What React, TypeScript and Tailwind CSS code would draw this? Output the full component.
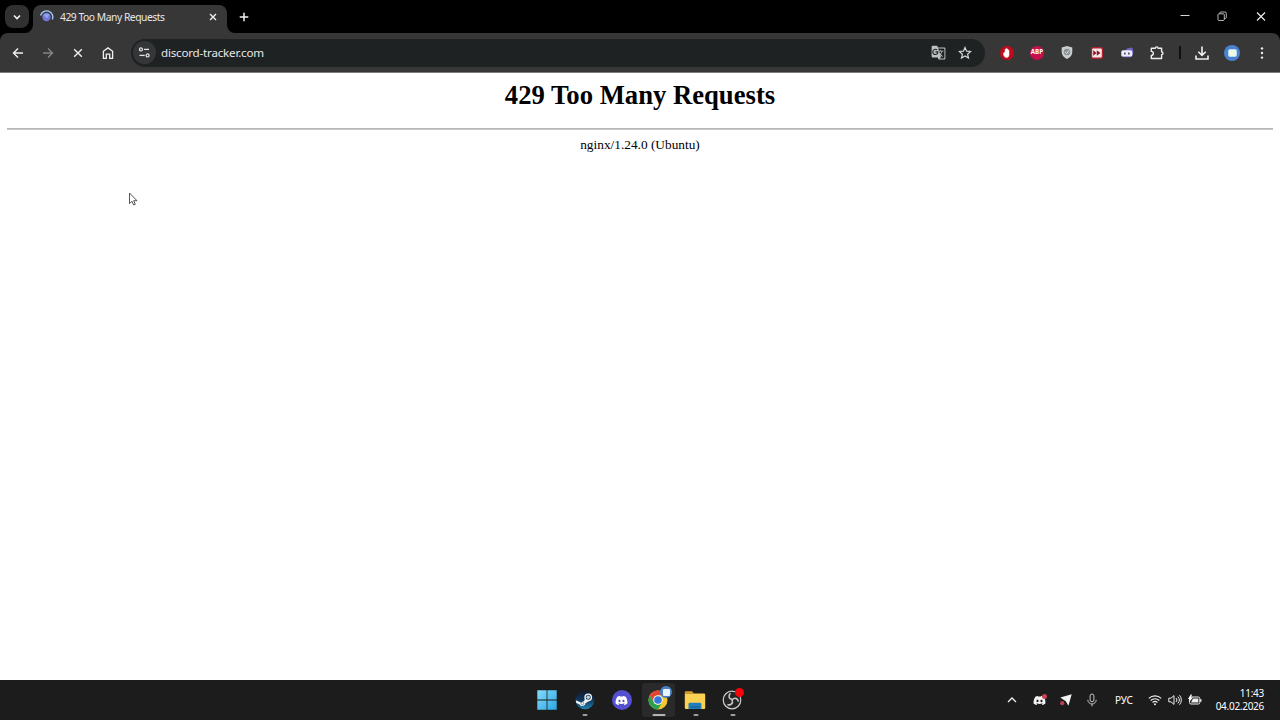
import type { ReactNode } from 'react';
import { FaDiscord } from 'react-icons/fa';
import { MdGTranslate } from 'react-icons/md';

function Slot({ children }: { children: ReactNode }) {
  return (
    <div className="w-[30px] h-[30px] shrink-0 flex items-center justify-center">
      {children}
    </div>
  );
}

function TabStrip() {
  return (
    <div className="h-[33px] bg-black flex items-start">
      <button className="mt-[5px] ml-[5px] w-6 h-[23px] rounded-[8px] bg-[#303030] flex items-center justify-center">
        <svg width="10" height="10" viewBox="0 0 10 10" fill="none" stroke="#f2f2f2" strokeWidth="1.6">
          <path d="M2 3.5 L5 6.5 L8 3.5" />
        </svg>
      </button>

      {/* Active tab */}
      <div className="relative mt-[5px] ml-1 w-[194px] h-7 rounded-t-[8px] bg-[#373737] flex items-center text-[#e8e8e8]">
        <svg className="absolute -left-2 bottom-0" width="8" height="8" viewBox="0 0 8 8">
          <path d="M8 0 V8 H0 A8 8 0 0 0 8 0Z" fill="#373737" />
        </svg>
        <svg className="absolute -right-2 bottom-0" width="8" height="8" viewBox="0 0 8 8">
          <path d="M0 0 V8 H8 A8 8 0 0 1 0 0Z" fill="#373737" />
        </svg>
        <svg className="ml-[6px] -mt-[5px] shrink-0" width="15" height="15" viewBox="0 0 15 15" fill="none">
          <circle cx="7.5" cy="8" r="4.2" fill="#7775d9" />
          <path d="M4.5 6.3a3.6 3.6 0 0 1 5.8-.3L8 9.5Z" fill="#8fa3ee" />
          <path d="M1.6 6.5A6.2 6.2 0 1 1 13.3 10.5" stroke="#9fcbf3" strokeWidth="1.4" />
        </svg>
        <span className="ml-[6px] -mt-[3px] w-[120px] whitespace-nowrap text-[10.3px] tracking-[-0.46px] font-['Noto_Sans',sans-serif]">
          429 Too Many Requests
        </span>
        <svg className="ml-[28px] -mt-[5px]" width="10" height="10" viewBox="0 0 10 10" stroke="#f0f0f0" strokeWidth="1.4">
          <path d="M2 2 L8 8 M8 2 L2 8" />
        </svg>
      </div>

      <svg className="mt-[11px] ml-[11px]" width="12" height="12" viewBox="0 0 12 12" stroke="#f2f2f2" strokeWidth="1.5">
        <path d="M6 1.7 V10.3 M1.7 6 H10.3" />
      </svg>

      <div className="ml-auto mt-[10px] flex items-center gap-[26px] mr-[13px]">
        <svg width="12" height="12" viewBox="0 0 12 12" stroke="#d6d6d6" strokeWidth="1">
          <path d="M1.5 5.5 H10.5" />
        </svg>
        <svg className="-ml-px mr-px" width="12" height="12" viewBox="0 0 12 12" fill="none" stroke="#c8c8c8" strokeWidth="0.9">
          <rect x="2" y="3.8" width="6.3" height="6.7" rx="1" />
          <path d="M3.8 3.8V3a1 1 0 0 1 1-1H9a1.3 1.3 0 0 1 1.3 1.3V7.5a1 1 0 0 1-1 1h-1" />
        </svg>
        <svg width="12" height="12" viewBox="0 0 12 12" stroke="#f0f0f0" strokeWidth="1.1">
          <path d="M2 2.5 L10 10.5 M10 2.5 L2 10.5" />
        </svg>
      </div>
    </div>
  );
}

function AddressBar() {
  return (
    <div className="ml-2 mr-[7px] flex-1 h-7 rounded-full bg-[#1f2223] flex items-center">
      <div className="ml-[2px] w-[23px] h-[23px] rounded-full bg-[#343637] flex items-center justify-center">
        <svg width="13" height="13" viewBox="0 0 13 13" fill="none" stroke="#e4e4e4" strokeWidth="1.3">
          <circle cx="3" cy="3.4" r="1.5" />
          <path d="M6 3.4 H11" />
          <circle cx="9.6" cy="9.4" r="1.5" />
          <path d="M1.5 9.4 H6.7" />
        </svg>
      </div>
      <span className="ml-[5px] text-[11.6px] tracking-[-0.2px] text-[#e6e8e8] font-['Noto_Sans',sans-serif]">
        discord-tracker.com
      </span>
      <MdGTranslate className="ml-auto mr-[12px] text-[#bfc2c2]" size={15} />
      <svg className="mr-[13px]" width="14" height="14" viewBox="0 0 14 14" fill="none" stroke="#d3d5d5" strokeWidth="1.2">
        <path d="M7 1.5 L8.6 5.2 L12.6 5.5 L9.6 8.2 L10.5 12.1 L7 10 L3.5 12.1 L4.4 8.2 L1.4 5.5 L5.4 5.2Z" />
      </svg>
    </div>
  );
}

function Extensions() {
  return (
    <>
      <Slot>
        <svg width="16" height="16" viewBox="0 0 16 16">
          <path d="M5 1.3h6L14.7 5v6L11 14.7H5L1.3 11V5Z" fill="#c10a1c" />
          <path d="M5.2 7.6c.1-.5.8-.5.9 0V4.6c0-.6.9-.6.9 0v-.7c0-.7 1-.7 1 0v.7c0-.7 1-.6 1 0v.8c.1-.6 1-.5 1 .1v4.1c0 2-1 3-2.5 3-1.4 0-2-.8-2.6-2L4.3 8.7c-.1-.4.5-.6.9-.1Z" fill="#fff" stroke="#fff" strokeWidth="0.5" />
        </svg>
      </Slot>
      <Slot>
        <div className="w-[14px] h-[14px] rounded-full bg-[#c80f49] flex items-center justify-center text-white font-bold text-[6.2px] leading-none font-['Open_Sans',sans-serif]">
          ABP
        </div>
      </Slot>
      <Slot>
        <svg width="14" height="15" viewBox="0 0 14 15">
          <path d="M7 1 12.3 2.6V7c0 3.5-2.3 5.6-5.3 7-3-1.4-5.3-3.5-5.3-7V2.6Z" fill="#c9cdd0" />
          <circle cx="7" cy="7" r="3.3" fill="#8c9296" />
          <path d="M5.2 7.2 6.6 8.6 9 5.5" fill="none" stroke="#dfe2e4" strokeWidth="1" />
        </svg>
      </Slot>
      <Slot>
        <svg width="14" height="14" viewBox="0 0 14 14">
          <rect x="1" y="1" width="12" height="12" rx="2" fill="#b11f30" />
          <rect x="2.2" y="2.6" width="9.6" height="8.8" rx="1" fill="#f6e9e9" />
          <path d="M3.2 4.2 6.6 7 3.2 9.8Z M6.8 4.2 10.4 7 6.8 9.8Z" fill="#8e1423" />
        </svg>
      </Slot>
      <Slot>
        <svg width="14" height="14" viewBox="0 0 14 14">
          <path d="M6 3.8 7.5 2.2 12 1.6 13.2 4V8L11 11.2H3L1.3 9.5Z" fill="#6d65c4" />
          <rect x="1.3" y="4.3" width="11" height="6.2" rx="1.6" fill="#ececfa" />
          <rect x="4" y="6.4" width="1.7" height="2" rx="0.5" fill="#4b4c70" />
          <rect x="8" y="6.4" width="1.7" height="2" rx="0.5" fill="#4b4c70" />
        </svg>
      </Slot>
      <Slot>
        <svg width="16" height="16" viewBox="0 0 16 16" fill="none" stroke="#eeeeee" strokeWidth="1.4" strokeLinejoin="round">
          <path d="M2.3 3.3H6.3a1.4 1.4 0 0 1 2.8 0H12.6V6.9a1.4 1.4 0 0 1 0 2.8V13.5H2.3V10.4a2 2 0 0 0 0-4Z" />
        </svg>
      </Slot>
    </>
  );
}

function Toolbar() {
  return (
    <div className="bg-black">
      <div className="h-10 pb-px bg-[#373737] rounded-t-[8px] border-b border-[#7d7d7d] flex items-center px-[3px] pt-px">
        <Slot>
          <svg width="12" height="12" viewBox="0 0 12 12" fill="none" stroke="#f0f0f0" strokeWidth="1.4">
            <path d="M11 6H2M6 1.5 1.5 6 6 10.5" />
          </svg>
        </Slot>
        <Slot>
          <svg width="12" height="12" viewBox="0 0 12 12" fill="none" stroke="#858585" strokeWidth="1.3">
            <path d="M1 6H10M6 1.5 10.5 6 6 10.5" />
          </svg>
        </Slot>
        <Slot>
          <svg width="10" height="10" viewBox="0 0 10 10" stroke="#f0f0f0" strokeWidth="1.4">
            <path d="M1.2 1.2 8.8 8.8M8.8 1.2 1.2 8.8" />
          </svg>
        </Slot>
        <Slot>
          <svg width="14" height="14" viewBox="0 0 14 14" fill="none" stroke="#f0f0f0" strokeWidth="1.3">
            <path d="M2.4 5.3 7 1.9 11.6 5.3V12.3H8.7V8.2H5.3V12.3H2.4Z" />
          </svg>
        </Slot>
        <AddressBar />
        <Extensions />
        <div className="w-[15px] flex justify-center">
          <div className="w-[2px] h-[13px] bg-[#111111]" />
        </div>
        <Slot>
          <svg width="16" height="16" viewBox="0 0 16 16" fill="none" stroke="#f0f0f0" strokeWidth="1.6">
            <path d="M8 1.5V10M4.3 6.7 8 10.4 11.7 6.7M2 10.5V14H14V10.5" />
          </svg>
        </Slot>
        <Slot>
          <div className="w-4 h-4 rounded-full bg-[#4a82cf] flex items-center justify-center">
            <div className="w-[9px] h-[8px] rounded-[2px] bg-[#eef8e6] border border-[#b9dcf0]" />
          </div>
        </Slot>
        <Slot>
          <svg width="4" height="14" viewBox="0 0 4 14" fill="#efefef">
            <circle cx="2" cy="2.4" r="1.2" />
            <circle cx="2" cy="7" r="1.2" />
            <circle cx="2" cy="11.6" r="1.2" />
          </svg>
        </Slot>
      </div>
    </div>
  );
}

function TaskItem({ children, running, active }: { children: ReactNode; running?: boolean; active?: boolean }) {
  return (
    <div className="w-[37px] h-10 flex items-center justify-center">
      <div
        className={`relative w-[33px] h-[34px] rounded-[3px] flex items-center justify-center ${
          active ? 'bg-[#2a2a2a]' : ''
        }`}
      >
        {children}
        {running && (
          <span
            className={`absolute bottom-[1px] left-1/2 -translate-x-1/2 h-[2px] rounded-full ${
              active ? 'w-[13px] bg-[#b5b5b5]' : 'w-[5px] bg-[#a0a0a0]'
            }`}
          />
        )}
      </div>
    </div>
  );
}

function Taskbar() {
  return (
    <div className="relative h-10 bg-[#1c1c1c] flex items-center justify-center text-white">
      <TaskItem>
        <svg className="-ml-px" width="20" height="20" viewBox="0 0 20 20">
          <defs>
            <linearGradient id="win" x1="0" y1="0" x2="20" y2="20" gradientUnits="userSpaceOnUse">
              <stop stopColor="#84dcf8" />
              <stop offset="1" stopColor="#2ba5e4" />
            </linearGradient>
          </defs>
          <path d="M.3.3H9.6V9.6H.3ZM10.4.3H19.7V9.6H10.4ZM.3 10.4H9.6V19.7H.3ZM10.4 10.4H19.7V19.7H10.4Z" fill="url(#win)" />
        </svg>
      </TaskItem>
      <TaskItem running>
        <svg width="20" height="20" viewBox="0 0 20 20">
          <defs>
            <linearGradient id="steam" x1="0" y1="0" x2="0" y2="1">
              <stop stopColor="#10192f" />
              <stop offset="0.5" stopColor="#10355b" />
              <stop offset="1" stopColor="#2386b4" />
            </linearGradient>
          </defs>
          <circle cx="10" cy="10" r="9.3" fill="url(#steam)" />
          <path d="M.7 10.2 6 12.4 9 10.9 11 7.2 14.8 10.6 10.5 13.3C10 16.4 6.2 17 4.8 14.5L1.3 13Z" fill="#f4f6f8" />
          <circle cx="13.2" cy="7.3" r="3.2" fill="#163451" stroke="#f4f6f8" strokeWidth="1.4" />
          <circle cx="13.2" cy="7.3" r="1.7" fill="#c9d4dd" />
          <circle cx="7.4" cy="13.4" r="1.4" fill="none" stroke="#24506f" strokeWidth="0.5" />
        </svg>
      </TaskItem>
      <TaskItem>
        <div className="w-5 h-5 rounded-full bg-[#5450cf] flex items-center justify-center">
          <FaDiscord size={13} color="#fff" />
        </div>
      </TaskItem>
      <TaskItem running active>
        <svg className="-ml-px" width="20" height="20" viewBox="0 0 20 20">
          <circle cx="10" cy="10" r="9.5" fill="#f6c72c" />
          <path d="M1.77 5.25A9.5 9.5 0 0 1 18.23 5.25H10L5.9 12.4Z" fill="#e04434" />
          <path d="M1.77 5.25 5.9 12.4A4.75 4.75 0 0 0 14.1 12.4L10 19.5A9.5 9.5 0 0 1 1.77 5.25Z" fill="#2ba052" />
          <circle cx="10" cy="10" r="4.8" fill="#f5f7f5" />
          <circle cx="10" cy="10" r="3.8" fill="#3478dc" />
        </svg>
        <span className="absolute left-[18px] top-[3px] w-3 h-3 rounded-full bg-[#4a80c4] flex items-center justify-center">
          <span className="w-[7px] h-[7px] rounded-[1px] bg-[#e9f4f6]" />
        </span>
      </TaskItem>
      <TaskItem running>
        <svg className="-ml-px" width="22" height="20" viewBox="0 0 22 20">
          <path d="M.8 2.3a1 1 0 0 1 1-1H8L10 3.5H.8Z" fill="#dd9f20" />
          <path d="M.8 3.5H20a1.2 1.2 0 0 1 1.2 1.2V18a1 1 0 0 1-1 1H1.8a1 1 0 0 1-1-1Z" fill="#fbd152" />
          <path d="M4.5 19V14.2a1.4 1.4 0 0 1 1.4-1.4H16a1.4 1.4 0 0 1 1.4 1.4V19Z" fill="#2080bd" />
          <path d="M6.5 17h9" stroke="#165d98" strokeWidth="1.2" />
        </svg>
      </TaskItem>
      <TaskItem running>
        <svg className="-ml-px" width="20" height="20" viewBox="0 0 20 20" fill="none">
          <circle cx="10" cy="10" r="8.8" fill="#242426" stroke="#cecece" strokeWidth="1.2" />
          <g stroke="#c6c6c6" strokeWidth="1.6" strokeLinecap="round">
            <path d="M10 9.5C6.8 9 6.2 6 8 3.8" />
            <path d="M10.4 9.6C12.5 7.2 15.7 8.3 16.2 11" />
            <path d="M10.2 10.2C11.3 13.3 8.8 15.5 6 14.7" />
          </g>
        </svg>
        <span className="absolute left-[19px] top-[5px] w-[9px] h-[9px] rounded-full bg-[#f4060a]" />
      </TaskItem>

      {/* System tray */}
      <div className="absolute right-4 top-0 h-10 flex items-center">
        <svg className="mr-[16px]" width="10" height="8" viewBox="0 0 10 8" fill="none" stroke="#eeeeee" strokeWidth="1.3">
          <path d="M1 6 5 2 9 6" />
        </svg>
        <div className="relative mr-[13px]">
          <FaDiscord size={13} color="#f2f2f2" />
          <span className="absolute -right-px top-0 w-[5px] h-[5px] rounded-full bg-[#c64355]" />
        </div>
        <svg className="mr-[14px]" width="14" height="14" viewBox="0 0 14 14">
          <path d="M1.3 4.6 12.7 1.3 9.4 12.7 6.8 8.2Z" fill="#f5f5f5" />
          <circle cx="3.2" cy="10.2" r="2.1" fill="#bd4053" />
        </svg>
        <svg className="mr-[18px]" width="10" height="14" viewBox="0 0 10 14" fill="none" stroke="#c4c4c4" strokeWidth="1">
          <rect x="3.1" y="1" width="3.8" height="7.8" rx="1.9" />
          <path d="M.8 6.8a4.2 4.2 0 0 0 8.4 0M5 11V13.3" />
        </svg>
        <span className="w-[18px] mr-[15px] text-[10px] tracking-[-0.1px] font-['Noto_Sans',sans-serif]">РУС</span>
        <svg className="mr-[6px]" width="14" height="12" viewBox="0 0 14 12" fill="none" stroke="#eeeeee" strokeWidth="1.1">
          <path d="M.8 4.4a8.8 8.8 0 0 1 12.4 0M2.7 6.5a6 6 0 0 1 8.6 0M4.6 8.5a3.4 3.4 0 0 1 4.8 0" />
          <circle cx="7" cy="10.2" r="1" fill="#eeeeee" stroke="none" />
        </svg>
        <svg className="mr-[6px]" width="14" height="12" viewBox="0 0 14 12" fill="none" stroke="#eeeeee" strokeWidth="1">
          <path d="M.8 4.2H3L6 1.6V10.4L3 7.8H.8Z" />
          <path d="M8 4a2.8 2.8 0 0 1 0 4M9.8 2.6a5 5 0 0 1 0 6.8M11.5 1.2a7.2 7.2 0 0 1 0 9.6" />
        </svg>
        <svg className="mr-[13px]" width="14" height="12" viewBox="0 0 14 12" fill="none">
          <rect x="1.5" y="3" width="10.3" height="7" rx="1.5" stroke="#eeeeee" />
          <path d="M5 4.6H10.4V8.6H3Z" fill="#eeeeee" />
          <path d="M12.8 5.2V7.8" stroke="#eeeeee" strokeWidth="1.4" />
          <path d="M2.6.4 0 5.1H2L1.2 8 5 3.6H3L4 .4Z" fill="#f5f5f5" />
        </svg>
        <div className="w-[49px] text-right text-[10px] leading-[13px] tracking-[-0.28px] whitespace-nowrap font-['Noto_Sans',sans-serif]">
          <div>11:43</div>
          <div>04.02.2026</div>
        </div>
      </div>
    </div>
  );
}

export default function App() {
  return (
    <div className="w-[1280px] h-[720px] flex flex-col overflow-hidden bg-white">
      <TabStrip />
      <Toolbar />

      <main className="relative flex-1 px-[7px] text-center text-black font-['Liberation_Serif',serif]">
        <h1 className="mt-[7px] text-[26.67px] leading-[30px] font-bold">429 Too Many Requests</h1>
        <hr className="mt-[18px] h-[2px] border-0 border-t border-b border-t-[#b8b8b8] border-b-[#c8c8c8]" />
        <p className="mt-[7px] text-[13.33px] leading-[15px]">nginx/1.24.0 (Ubuntu)</p>

        {/* Mouse pointer */}
        <svg className="absolute left-[128px] top-[119px]" width="10" height="15" viewBox="0 0 10 15">
          <path d="M1.5 1V11.6L4 9.3 5.6 13 7.3 12.3 5.7 8.7H9Z" fill="#fff" stroke="#444" strokeWidth="0.9" />
        </svg>
      </main>

      <Taskbar />
    </div>
  );
}
